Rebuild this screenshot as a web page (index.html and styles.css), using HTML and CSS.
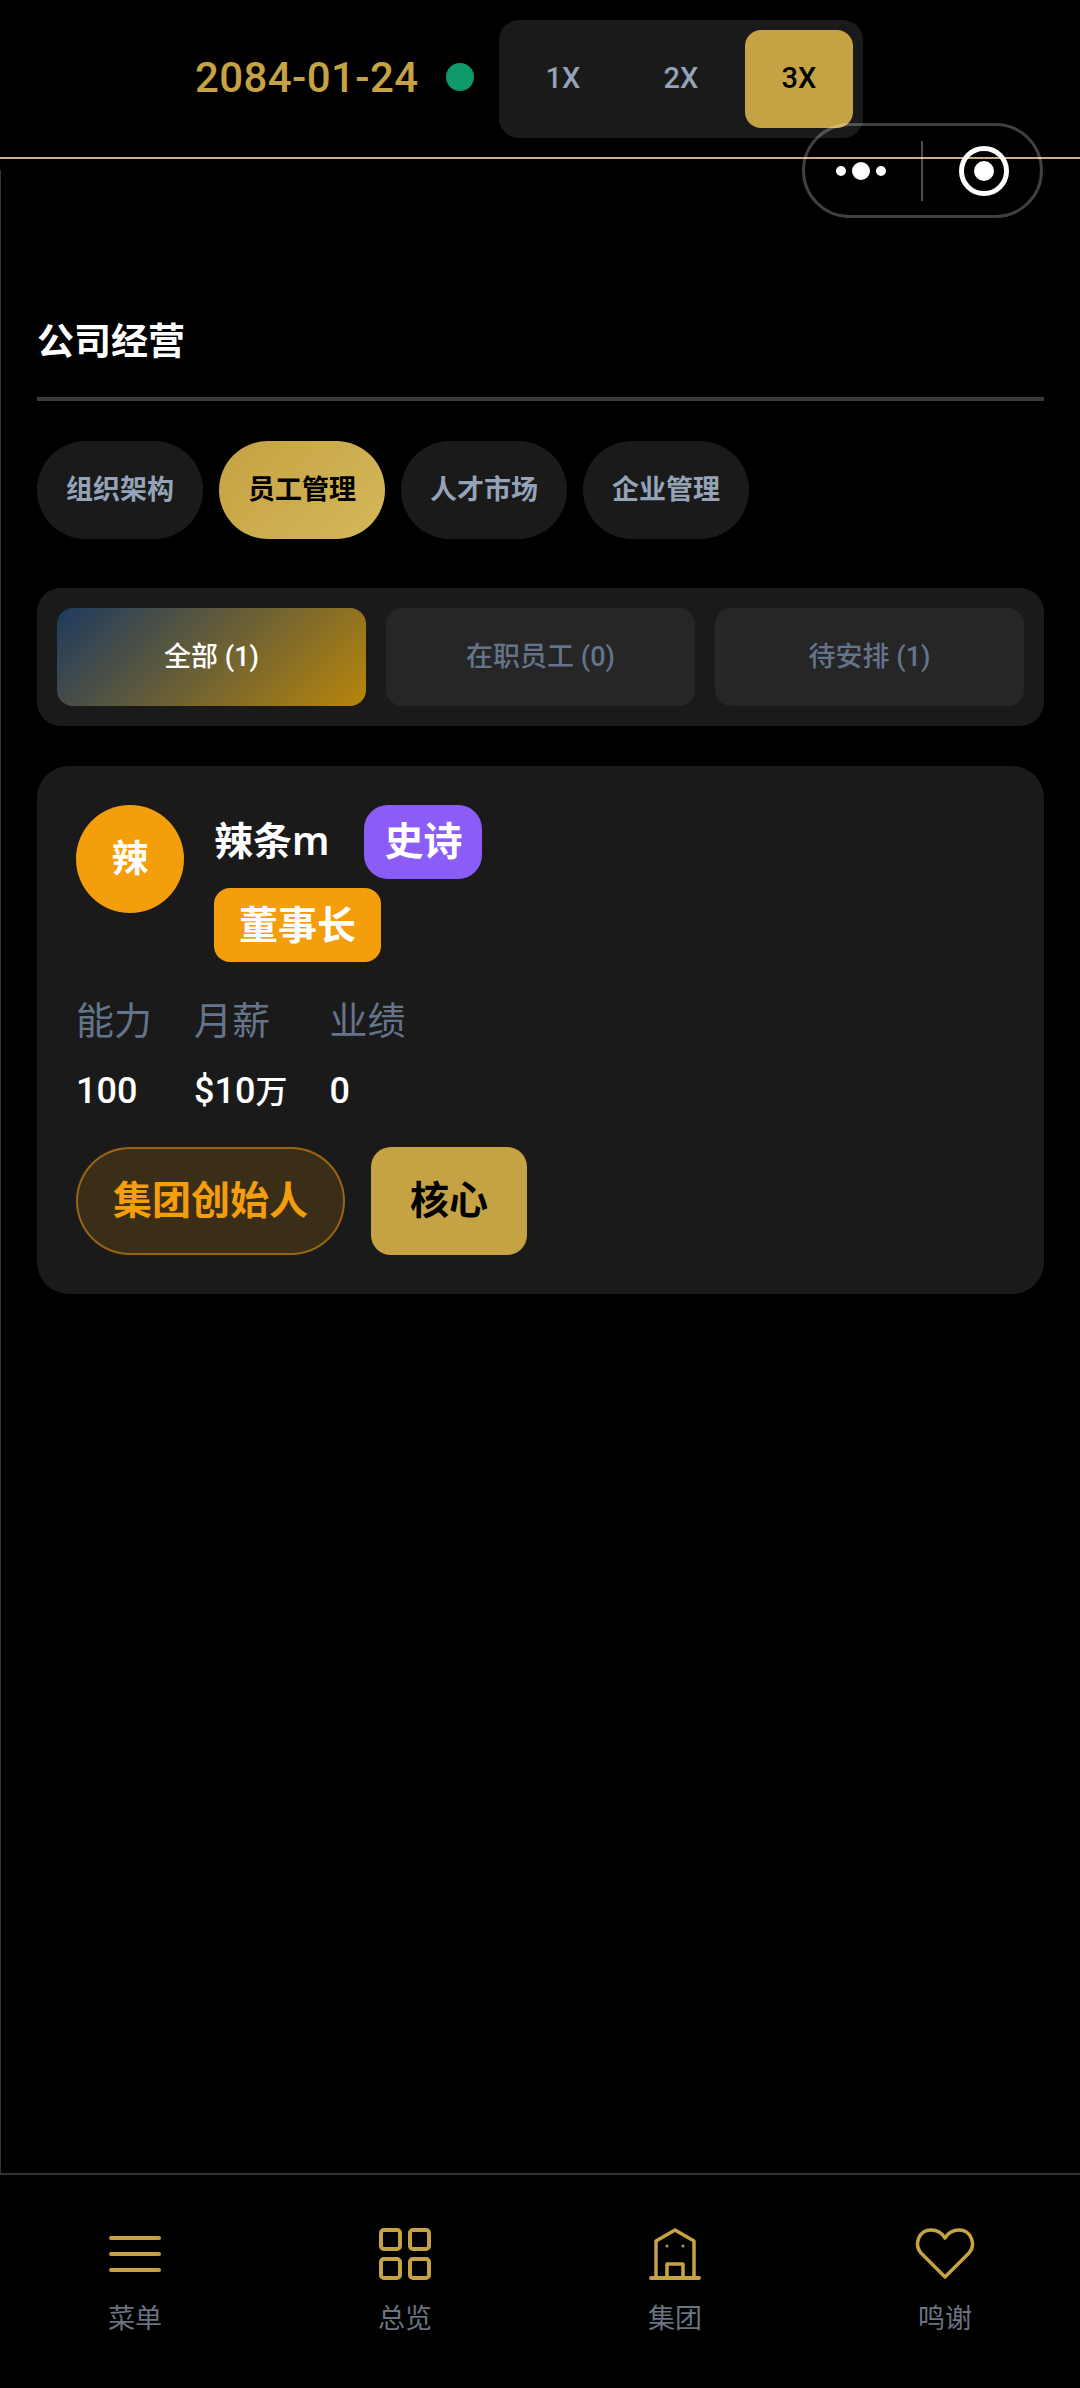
FILE: index.html
```html
<!DOCTYPE html>
<html lang="zh-CN">
<head>
    <meta charset="UTF-8">
    <meta name="viewport" content="width=device-width, initial-scale=1.0">
    <title>公司经营</title>
    <link rel="stylesheet" href="styles.css">
</head>
<body>

    <header class="topbar">
        <span class="date">2084-01-24</span>
        <span class="status-dot"></span>
        <div class="speed">
            <button class="speed-btn">1X</button>
            <button class="speed-btn">2X</button>
            <button class="speed-btn active">3X</button>
        </div>
    </header>

    <!-- Mini program capsule, sits over the header -->
    <div class="capsule">
        <svg class="capsule-more" viewBox="0 0 50 18" width="50" height="18">
            <circle cx="5" cy="9" r="5" fill="#fff"/>
            <circle cx="25" cy="9" r="9" fill="#fff"/>
            <circle cx="45" cy="9" r="5" fill="#fff"/>
        </svg>
        <span class="capsule-divider"></span>
        <svg class="capsule-close" viewBox="0 0 50 50" width="50" height="50">
            <circle cx="25" cy="25" r="22.5" fill="none" stroke="#fff" stroke-width="5"/>
            <circle cx="25" cy="25" r="10" fill="#fff"/>
        </svg>
    </div>

    <main class="content">
        <h2 class="section-title">公司经营</h2>

        <div class="tabs">
            <div class="tab">组织架构</div>
            <div class="tab active">员工管理</div>
            <div class="tab">人才市场</div>
            <div class="tab">企业管理</div>
        </div>

        <div class="filters">
            <div class="filter active">全部 (1)</div>
            <div class="filter">在职员工 (0)</div>
            <div class="filter">待安排 (1)</div>
        </div>

        <div class="card">
            <div class="card-head">
                <div class="avatar">辣</div>
                <div class="card-info">
                    <span class="name">辣条m</span>
                    <span class="badge epic">史诗</span>
                    <span class="badge role">董事长</span>
                </div>
            </div>
            <div class="stats">
                <div class="stat">
                    <span class="stat-label">能力</span>
                    <span class="stat-value">100</span>
                </div>
                <div class="stat">
                    <span class="stat-label">月薪</span>
                    <span class="stat-value">$10<span class="stat-unit">万</span></span>
                </div>
                <div class="stat">
                    <span class="stat-label">业绩</span>
                    <span class="stat-value">0</span>
                </div>
            </div>
            <div class="card-actions">
                <div class="tag-founder">集团创始人</div>
                <div class="tag-core">核心</div>
            </div>
        </div>
    </main>

    <nav class="bottom-nav">
        <div class="nav-item">
            <svg class="nav-icon" viewBox="0 0 52 52" width="52" height="52">
                <path d="M2 10H50M2 26H50M2 42H50" fill="none" stroke="#c5a243" stroke-width="4" stroke-linecap="round"/>
            </svg>
            <span>菜单</span>
        </div>
        <div class="nav-item">
            <svg class="nav-icon" viewBox="0 0 52 52" width="52" height="52">
                <g fill="none" stroke="#c5a243" stroke-width="4">
                    <rect x="2" y="2" width="19" height="19" rx="3"/>
                    <rect x="31" y="2" width="19" height="19" rx="3"/>
                    <rect x="2" y="31" width="19" height="19" rx="3"/>
                    <rect x="31" y="31" width="19" height="19" rx="3"/>
                </g>
            </svg>
            <span>总览</span>
        </div>
        <div class="nav-item">
            <svg class="nav-icon" viewBox="0 0 52 52" width="52" height="52">
                <path d="M7 50V13L26 2L45 13V50M18 50V36H34V50" fill="none" stroke="#c5a243" stroke-width="3.5" stroke-linejoin="round"/>
                <path d="M2 50H50" fill="none" stroke="#c5a243" stroke-width="4" stroke-linecap="round"/>
                <circle cx="18" cy="18" r="1.6" fill="#a8904f"/>
                <circle cx="34" cy="18" r="1.6" fill="#a8904f"/>
            </svg>
            <span>集团</span>
        </div>
        <div class="nav-item">
            <svg class="nav-icon" viewBox="0 0 60 52" width="60" height="52">
                <path d="M30 49L6.500 25.500C-1.500 17 3.500 2 16 2C22 2 27 5 30 10C33 5 38 2 44 2C56.500 2 61.500 17 53.500 25.500Z" fill="none" stroke="#c5a243" stroke-width="3.500" stroke-linejoin="round"/>
            </svg>
            <span>鸣谢</span>
        </div>
    </nav>

</body>
</html>
```

FILE: styles.css
```css
* {
    box-sizing: border-box;
}
body {
    font-family: Roboto, "Noto Sans CJK SC", sans-serif;
    background: #000;
    color: #fff;
    margin: 0;
    height: 100vh;
    display: flex;
    flex-direction: column;
    position: relative;
    overflow: hidden;
}

/* top bar */
.topbar {
    height: 159px;
    padding: 20px 0 0 195px;
    border-bottom: 2px solid #c9ad85;
    display: flex;
    align-items: flex-start;
    flex-shrink: 0;
}
.date {
    width: 223px;
    font-size: 42px;
    line-height: 116px;
    font-weight: 500;
    letter-spacing: 0.4px;
    white-space: nowrap;
    color: #c5a243;
}
.status-dot {
    width: 28px;
    height: 28px;
    margin: 43px 25px 0 28px;
    border-radius: 50%;
    background: #10996a;
}
.speed {
    display: flex;
    gap: 10px;
    padding: 10px;
    background: #1a1a1a;
    border-radius: 20px;
}
.speed-btn {
    width: 108px;
    height: 98px;
    padding: 0 0 3px;
    border: none;
    border-radius: 16px;
    background: none;
    color: #94a3b8;
    font-family: Roboto, sans-serif;
    font-size: 29px;
    font-weight: 500;
}
.speed-btn.active {
    background: #c5a243;
    color: #000;
}

.capsule {
    position: absolute;
    left: 802px;
    top: 123px;
    width: 241px;
    height: 95px;
    border: 3px solid rgba(255, 255, 255, 0.25);
    border-radius: 48px;
    display: flex;
    align-items: center;
}
.capsule-more {
    margin-left: 31px;
}
.capsule-divider {
    width: 2px;
    height: 60px;
    margin-left: 35px;
    background: rgba(255, 255, 255, 0.3);
}
.capsule-close {
    margin-left: 36px;
}

/* main */
.content {
    flex: 1;
    margin-top: 11px;
    padding: 0 36px;
    border-left: 1px solid #333;
}
.section-title {
    margin: 0;
    padding: 146px 0 27px;
    font-size: 37px;
    line-height: 54px;
    font-weight: 700;
    border-bottom: 4px solid #3a3a3a;
}
.tabs {
    display: flex;
    gap: 16px;
    margin-top: 40px;
}
.tab {
    width: 166px;
    height: 98px;
    padding-bottom: 6px;
    border-radius: 49px;
    background: #1a1a1a;
    color: #94a3b8;
    font-size: 27px;
    font-weight: 700;
    display: flex;
    align-items: center;
    justify-content: center;
}
.tab.active {
    background: linear-gradient(135deg, #c5a243, #d4b85a);
    color: #000;
}
.filters {
    display: flex;
    gap: 20px;
    margin-top: 49px;
    padding: 20px;
    background: #1a1a1a;
    border-radius: 24px;
}
.filter {
    flex: 1;
    height: 98px;
    padding-bottom: 6px;
    border-radius: 16px;
    background: #262626;
    color: #64748b;
    font-size: 27px;
    font-weight: 500;
    display: flex;
    align-items: center;
    justify-content: center;
}
.filter.active {
    background: linear-gradient(135deg, #1e3a5f, #b8860b);
    color: #fff;
}

/* employee card */
.card {
    margin-top: 40px;
    height: 528px;
    padding: 39px;
    background: #1a1a1a;
    border-radius: 32px;
}
.card-head {
    display: flex;
    gap: 30px;
}
.avatar {
    width: 108px;
    height: 108px;
    padding-bottom: 6px;
    flex-shrink: 0;
    border-radius: 50%;
    background: #f59e0b;
    font-size: 37px;
    font-weight: 700;
    display: flex;
    align-items: center;
    justify-content: center;
}
.card-info {
    display: flex;
    flex-wrap: wrap;
    align-items: center;
    gap: 9px 35px;
    width: 400px;
}
.name {
    padding-bottom: 9px;
    font-family: "Noto Sans", "Noto Sans CJK SC", sans-serif;
    font-size: 39px;
    font-weight: 600;
}
.badge {
    height: 74px;
    font-size: 39px;
    font-weight: 700;
    display: flex;
    align-items: center;
}
.badge.epic {
    padding: 0 20px 9px;
    background: #8b5cf6;
    border-radius: 24px;
}
.badge.role {
    padding: 0 25px 6px;
    background: #f59e0b;
    border-radius: 16px;
}
.stats {
    display: flex;
    gap: 42px;
    margin-top: 31px;
}
.stat {
    display: flex;
    flex-direction: column;
    gap: 16px;
}
.stat-label {
    font-size: 38px;
    line-height: 56px;
    color: #64748b;
}
.stat-value {
    font-size: 36px;
    line-height: 52px;
    font-weight: 500;
}
.stat-unit {
    font-size: 32px;
}
.card-actions {
    display: flex;
    gap: 26px;
    margin-top: 29px;
}
.tag-founder {
    height: 108px;
    padding: 0 35px 9px;
    border: 2px solid rgba(245, 158, 11, 0.5);
    border-radius: 54px;
    background: rgba(245, 158, 11, 0.15);
    color: #f59e0b;
    font-size: 39px;
    font-weight: 700;
    display: flex;
    align-items: center;
}
.tag-core {
    height: 108px;
    padding: 0 39px 9px;
    border-radius: 20px;
    background: #c5a243;
    color: #000;
    font-size: 39px;
    font-weight: 700;
    display: flex;
    align-items: center;
}

/* bottom nav */
.bottom-nav {
    height: 215px;
    flex-shrink: 0;
    padding-top: 53px;
    border-top: 2px solid #333;
    display: grid;
    grid-template-columns: repeat(4, 1fr);
}
.nav-item {
    display: flex;
    flex-direction: column;
    align-items: center;
    gap: 17px;
    color: #6b7280;
    font-size: 27px;
}
.nav-icon {
    display: block;
}
```
